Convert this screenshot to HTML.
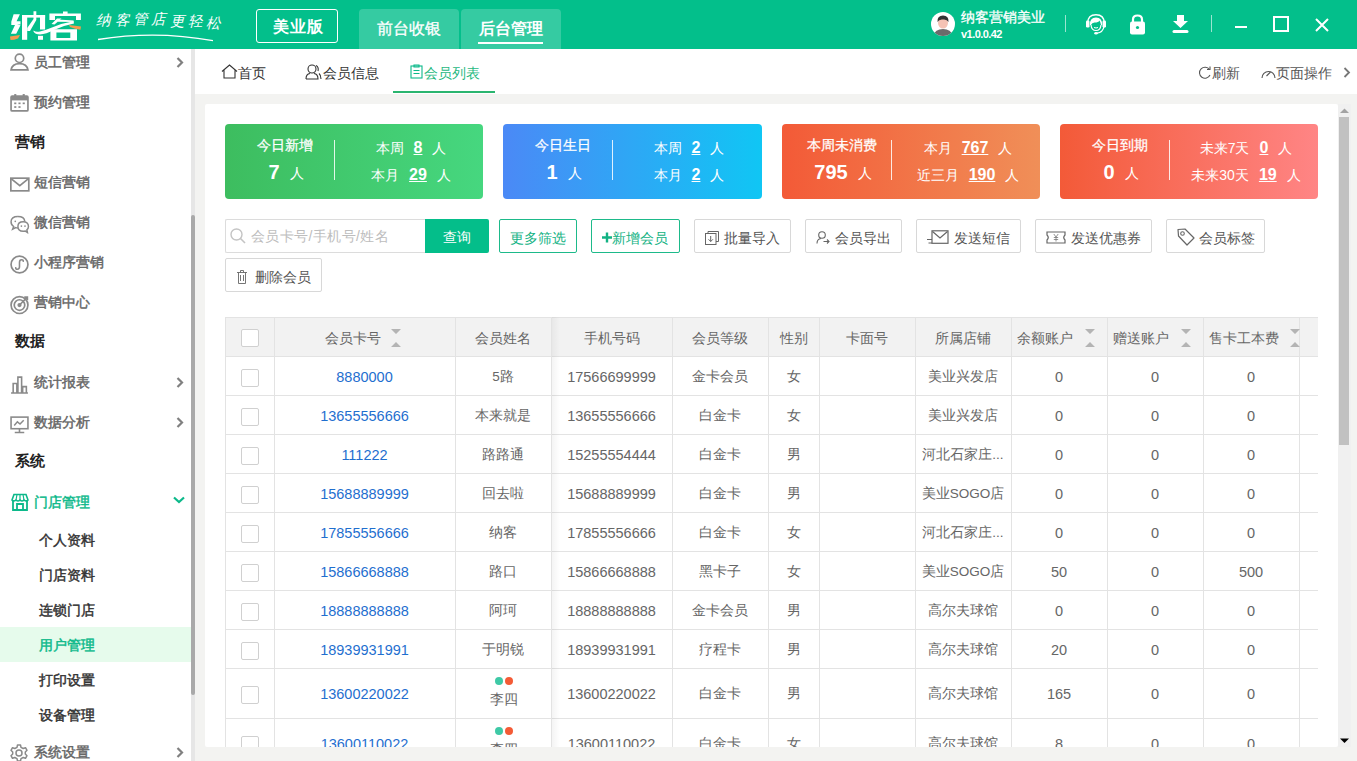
<!DOCTYPE html><html><head><meta charset="utf-8"><style>
*{box-sizing:border-box;margin:0;padding:0}
html,body{width:1357px;height:761px;overflow:hidden;background:#f3f3f1;font-family:"Liberation Sans",sans-serif;}
.abs{position:absolute}
.t{position:absolute;white-space:nowrap;line-height:1}
svg{position:absolute;overflow:visible}
</style></head><body>

<div class="abs" style="left:0;top:0;width:1357px;height:49px;background:#03bf8b"></div>
<svg style="left:0;top:0" width="90" height="48" viewBox="0 0 90 48">
<g fill="#fff">
<path d="M13.6 14.3 L19.9 14.3 L16.6 21.3 L20.5 21.3 L20.5 24.6 L17 24.6 L20.5 25.2 L16.2 33.8 L10.9 33.8 L15 25 L11.3 25 L11.3 21.8 L13.8 21.8 L11.3 21.8 Z"/>
<path d="M22 15 L27.2 15 L27.2 39.8 L22 39.8 Z"/>
<path d="M22 15 L45.1 15 L45.1 17.6 L22 17.6 Z"/>
<path d="M40 15 L45.1 15 L45.1 29.5 L40 29.5 Z"/>
<path d="M33.5 11.3 L36.3 11.3 L36.3 20 L30 31 L27.2 31 L27.2 28 L33.5 19 Z"/>
<path d="M38 35.8 L43 35.8 L43 39.8 L38 39.8 Z"/>
<path d="M63 11.5 L67.6 11.5 L67.6 14 L63 14 Z"/>
<path d="M49.4 13.6 L80.9 13.6 L80.9 19.9 L76 19.9 L76 16 L55 16 L55 19.9 L49.4 19.9 Z"/>
<path d="M57 18.5 L61.5 18.5 L54.5 24.5 L51.5 24 Z"/><path d="M58 19.5 L73.6 20.5 L73.6 22 L58 21.8 Z"/>
<path d="M33.5 30.5 Q36 32.5 40 31.5 Q46 30 52 27.5 Q62 23 73.6 21.2 L74 23.5 Q63 25.5 54 30 Q46 34 40 34.5 Q35 34.5 33.5 31.5 Z"/>
<path d="M50.4 29.2 L77 29.2 L77 40.5 L50.4 40.5 Z M56.4 32.5 L56.4 38.1 L70.3 38.1 L70.3 32.5 Z" fill-rule="evenodd"/>
</g>
<path d="M10 36.5 Q15 35.5 20 35 L18 38.5 Q14 40 10.5 40 Z" fill="#f49a4e"/>
<path d="M69 25 Q75 25.5 81 26.5 L80.5 29.8 Q75 29 70 27 Z" fill="#f49a4e"/>
</svg>
<div class="t" style="left:96px;top:13px;font-size:14.5px;color:#fff;font-style:italic">纳</div>
<div class="t" style="left:115px;top:13px;font-size:14.5px;color:#fff;font-style:italic">客</div>
<div class="t" style="left:133px;top:12px;font-size:14.5px;color:#fff;font-style:italic">管</div>
<div class="t" style="left:151px;top:12px;font-size:14.5px;color:#fff;font-style:italic">店</div>
<div class="t" style="left:170px;top:14px;font-size:14.5px;color:#fff;font-style:italic">更</div>
<div class="t" style="left:188px;top:14px;font-size:14.5px;color:#fff;font-style:italic">轻</div>
<div class="t" style="left:206px;top:16px;font-size:14.5px;color:#fff;font-style:italic">松</div>
<svg style="left:96px;top:30px" width="125" height="14"><path d="M2 9.5 Q60 0 117 10.7" stroke="#fff" stroke-width="1.3" fill="none"/></svg>
<div class="abs" style="left:256px;top:9px;width:82px;height:34px;border:1px solid #fff;border-radius:3px"></div>
<div class="t" style="left:257px;top:19px;width:82px;text-align:center;font-size:16px;font-weight:bold;color:#fff;letter-spacing:1px">美业版</div>
<div class="abs" style="left:359px;top:9px;width:100px;height:40px;background:rgba(255,255,255,0.2);border-radius:4px 4px 0 0"></div>
<div class="abs" style="left:461px;top:9px;width:100px;height:40px;background:rgba(255,255,255,0.2);border-radius:4px 4px 0 0"></div>
<div class="t" style="left:359px;top:21px;width:100px;text-align:center;font-size:16px;color:#fff;-webkit-text-stroke-width:0.3px">前台收银</div>
<div class="t" style="left:461px;top:21px;width:100px;text-align:center;font-size:16px;color:#fff;font-weight:bold">后台管理</div>
<div class="abs" style="left:478px;top:42px;width:65px;height:2px;background:#fff"></div>
<svg style="left:931px;top:12px" width="24" height="24" viewBox="0 0 24 24">
<defs><clipPath id="av"><circle cx="12" cy="12" r="12"/></clipPath></defs>
<circle cx="12" cy="12" r="12" fill="#fff"/>
<g clip-path="url(#av)">
<path d="M2 24 Q4 17 12 17 Q20 17 22 24 Z" fill="#6b6b6b"/>
<ellipse cx="12" cy="11" rx="5" ry="5.5" fill="#f5c2b4"/>
<path d="M6.5 10 Q6 3.5 12 3.5 Q18 3.5 17.5 10 Q16 7 12 7.5 Q8 7 6.5 10 Z" fill="#333"/>
</g></svg>
<div class="t" style="left:961px;top:10px;font-size:14px;color:#fff;-webkit-text-stroke:0.3px #fff">纳客营销美业</div>
<div class="t" style="left:961px;top:28.5px;font-size:11px;color:#fff;font-weight:bold;letter-spacing:-0.55px">v1.0.0.42</div>
<div class="abs" style="left:1065px;top:15px;width:1px;height:17px;background:rgba(255,255,255,0.6)"></div>
<svg style="left:1085px;top:13px" width="22" height="22" viewBox="0 0 22 22">
<path d="M2.8 10 Q2.8 1.8 11 1.8 Q19.2 1.8 19.2 10" stroke="#fff" stroke-width="1.4" fill="none"/>
<rect x="1" y="7.5" width="3.5" height="7" rx="1.2" fill="#fff"/>
<rect x="17.5" y="7.5" width="3.5" height="7" rx="1.2" fill="#fff"/>
<path d="M5 12 Q4.5 4.5 11 4.5 Q17.5 4.5 17 12 L16 12 Q15.5 9 14.5 7.5 Q13.5 9.5 9.5 9.5 Q7 9.5 6 12 Z" fill="#fff"/>
<path d="M6 12 Q6.5 17.5 11 17.5 Q15.5 17.5 16 12" stroke="#fff" stroke-width="1.2" fill="none"/>
<path d="M9 14.5 Q11 15.5 13 14.5" stroke="#fff" stroke-width="1" fill="none"/>
<path d="M19 13.5 Q18 19.5 12 20.2" stroke="#fff" stroke-width="1.3" fill="none"/>
<ellipse cx="11" cy="20.2" rx="1.8" ry="1.3" fill="#fff"/>
</svg>
<svg style="left:1129px;top:14px" width="17" height="21" viewBox="0 0 17 21">
<path d="M4 8 L4 5.5 Q4 1.5 8.5 1.5 Q13 1.5 13 5.5 L13 8" stroke="#fff" stroke-width="2.2" fill="none"/>
<rect x="1" y="7.5" width="15" height="13" rx="2" fill="#fff"/>
<circle cx="8.5" cy="13.5" r="1.6" fill="#03bf8b"/>
</svg>
<svg style="left:1172px;top:14px" width="17" height="20" viewBox="0 0 17 20">
<path d="M5 1 L12 1 L12 7 L16 7 L8.5 14 L1 7 L5 7 Z" fill="#fff"/>
<rect x="0.5" y="16" width="16" height="3" rx="1.5" fill="#fff"/>
</svg>
<div class="abs" style="left:1211px;top:15px;width:1px;height:17px;background:rgba(255,255,255,0.6)"></div>
<div class="abs" style="left:1235px;top:26px;width:12px;height:2px;background:#fff"></div>
<div class="abs" style="left:1273px;top:16px;width:16px;height:16px;border:2px solid #fff"></div>
<svg style="left:1315px;top:18px" width="14" height="14" viewBox="0 0 14 14">
<path d="M1 1 L13 13 M13 1 L1 13" stroke="#fff" stroke-width="2"/></svg>
<div class="abs" style="left:0;top:49px;width:191px;height:712px;background:#fff"></div>
<div class="abs" style="left:191px;top:49px;width:4px;height:712px;background:#e6e6e6"></div>
<div class="abs" style="left:191px;top:215px;width:4px;height:480px;background:#a9a9a9;border-radius:2px"></div>
<svg style="left:10px;top:53px" width="19" height="19" viewBox="0 0 18 18"><circle cx="9" cy="5" r="4" stroke="#8a8a8a" stroke-width="1.6" fill="none"/><path d="M1 16 Q2 10 9 10 Q16 10 17 16 Z" stroke="#8a8a8a" stroke-width="1.6" fill="none"/></svg>
<div class="t" style="left:34px;top:55px;font-size:14px;color:#666;-webkit-text-stroke-width:0.45px">员工管理</div>
<svg style="left:176px;top:57px" width="8" height="11" viewBox="0 0 8 11"><path d="M1.5 1 L6 5.5 L1.5 10" stroke="#808080" stroke-width="2.2" fill="none"/></svg>
<svg style="left:10px;top:93px" width="19" height="19" viewBox="0 0 18 18"><rect x="1" y="3" width="16" height="14" rx="1" stroke="#8a8a8a" stroke-width="1.6" fill="none"/><rect x="1" y="3" width="16" height="4" fill="#8a8a8a"/><rect x="4" y="1" width="2" height="3" fill="#8a8a8a"/><rect x="12" y="1" width="2" height="3" fill="#8a8a8a"/><g fill="#8a8a8a"><rect x="4" y="9" width="2" height="1.6"/><rect x="8" y="9" width="2" height="1.6"/><rect x="12" y="9" width="2" height="1.6"/><rect x="4" y="12.5" width="2" height="1.6"/><rect x="8" y="12.5" width="2" height="1.6"/></g></svg>
<div class="t" style="left:34px;top:95px;font-size:14px;color:#666;-webkit-text-stroke-width:0.45px">预约管理</div>
<div class="t" style="left:15px;top:134px;font-size:15px;color:#222;font-weight:bold">营销</div>
<svg style="left:10px;top:174.5px" width="19" height="19" viewBox="0 0 18 18"><rect x="0.8" y="3" width="17" height="12" stroke="#8a8a8a" stroke-width="1.6" fill="none"/><path d="M1 3.5 L9.3 10 L17.5 3.5" stroke="#8a8a8a" stroke-width="1.6" fill="none"/></svg>
<div class="t" style="left:34px;top:175px;font-size:14px;color:#666;-webkit-text-stroke-width:0.45px">短信营销</div>
<svg style="left:10px;top:214.5px" width="19" height="19" viewBox="0 0 18 18"><path d="M7.5 1.5 Q1 1.5 1 6.5 Q1 9.5 3.5 11 L2.5 13.5 L5.5 12 Q6.5 12.3 7.5 12.3" stroke="#8a8a8a" stroke-width="1.4" fill="none"/><path d="M7.5 1.5 Q13.5 1.5 14 6" stroke="#8a8a8a" stroke-width="1.4" fill="none"/><circle cx="5" cy="6" r="0.8" fill="#8a8a8a"/><path d="M12.5 6.5 Q7.5 6.5 7.5 11 Q7.5 15.5 12.5 15.5 Q13.5 15.5 14.5 15.2 L16.5 16.5 L16 14 Q17.5 12.8 17.5 11 Q17.5 6.5 12.5 6.5 Z" stroke="#8a8a8a" stroke-width="1.4" fill="#fff"/><circle cx="10.8" cy="10.5" r="0.8" fill="#8a8a8a"/><circle cx="14.2" cy="10.5" r="0.8" fill="#8a8a8a"/></svg>
<div class="t" style="left:34px;top:215px;font-size:14px;color:#666;-webkit-text-stroke-width:0.45px">微信营销</div>
<svg style="left:10px;top:254.5px" width="19" height="19" viewBox="0 0 18 18"><circle cx="9" cy="9" r="8" stroke="#8a8a8a" stroke-width="1.6" fill="none"/><path d="M5.5 11.5 Q5 13.5 7 13.5 Q9 13.5 9 11 L9 7 Q9 4.5 11 4.5 Q13 4.5 12.5 6.5" stroke="#8a8a8a" stroke-width="1.5" fill="none"/></svg>
<div class="t" style="left:34px;top:255px;font-size:14px;color:#666;-webkit-text-stroke-width:0.45px">小程序营销</div>
<svg style="left:10px;top:294.5px" width="19" height="19" viewBox="0 0 18 18"><circle cx="9" cy="9.5" r="8" stroke="#8a8a8a" stroke-width="1.6" fill="none"/><circle cx="9" cy="9.5" r="5" stroke="#8a8a8a" stroke-width="1.6" fill="none"/><circle cx="9" cy="9.5" r="2" fill="#8a8a8a"/><path d="M9 9.5 L16 2.5 M13.5 2 L16.5 2 L16.5 5" stroke="#8a8a8a" stroke-width="1.5" fill="none"/></svg>
<div class="t" style="left:34px;top:295px;font-size:14px;color:#666;-webkit-text-stroke-width:0.45px">营销中心</div>
<div class="t" style="left:15px;top:333px;font-size:15px;color:#222;font-weight:bold">数据</div>
<svg style="left:10px;top:374.5px" width="19" height="19" viewBox="0 0 18 18"><path d="M1 17 L17 17 M3 17 L3 8 L6.5 8 L6.5 17 M7.5 17 L7.5 2 L11 2 L11 17 M12 17 L12 11 L15.5 11 L15.5 17" stroke="#8a8a8a" stroke-width="1.5" fill="none"/></svg>
<div class="t" style="left:34px;top:375px;font-size:14px;color:#666;-webkit-text-stroke-width:0.45px">统计报表</div>
<svg style="left:176px;top:377px" width="8" height="11" viewBox="0 0 8 11"><path d="M1.5 1 L6 5.5 L1.5 10" stroke="#808080" stroke-width="2.2" fill="none"/></svg>
<svg style="left:10px;top:414.5px" width="19" height="19" viewBox="0 0 18 18"><rect x="1" y="2" width="16" height="11" stroke="#8a8a8a" stroke-width="1.5" fill="none"/><path d="M4 10 L7 6.5 L9.5 8.5 L13 5" stroke="#8a8a8a" stroke-width="1.4" fill="none"/><path d="M9 13 L9 16 M4.5 16.5 L13.5 16.5" stroke="#8a8a8a" stroke-width="1.5"/></svg>
<div class="t" style="left:34px;top:415px;font-size:14px;color:#666;-webkit-text-stroke-width:0.45px">数据分析</div>
<svg style="left:176px;top:417px" width="8" height="11" viewBox="0 0 8 11"><path d="M1.5 1 L6 5.5 L1.5 10" stroke="#808080" stroke-width="2.2" fill="none"/></svg>
<div class="t" style="left:15px;top:453px;font-size:15px;color:#222;font-weight:bold">系统</div>
<svg style="left:11px;top:493px" width="18" height="18" viewBox="0 0 18 18"><path d="M2 7 L2 17 L16 17 L16 7" stroke="#0cb98a" stroke-width="1.8" fill="none"/><path d="M1 7 L3 1.5 L15 1.5 L17 7 Q15.5 9 13 7 Q11 9 9 7 Q7 9 5 7 Q2.5 9 1 7 Z" stroke="#0cb98a" stroke-width="1.6" fill="none"/><path d="M6 17 L6 11 L12 11 L12 17" stroke="#0cb98a" stroke-width="1.8" fill="none"/><path d="M6 1.5 L5 7 M12 1.5 L13 7 M9 1.5 L9 7" stroke="#0cb98a" stroke-width="1.2"/></svg>
<div class="t" style="left:34px;top:495px;font-size:14px;color:#0cb98a;-webkit-text-stroke-width:0.45px">门店管理</div>
<svg style="left:173px;top:496px" width="12" height="8" viewBox="0 0 12 8"><path d="M1 1.5 L6 6 L11 1.5" stroke="#0cb98a" stroke-width="2.2" fill="none"/></svg>
<div class="abs" style="left:0;top:627px;width:191px;height:35px;background:#e6fbec"></div>
<div class="t" style="left:39px;top:533px;font-size:14px;color:#333;-webkit-text-stroke-width:0.45px">个人资料</div>
<div class="t" style="left:39px;top:568px;font-size:14px;color:#333;-webkit-text-stroke-width:0.45px">门店资料</div>
<div class="t" style="left:39px;top:603px;font-size:14px;color:#333;-webkit-text-stroke-width:0.45px">连锁门店</div>
<div class="t" style="left:39px;top:638px;font-size:14px;color:#0cb98a;-webkit-text-stroke-width:0.45px">用户管理</div>
<div class="t" style="left:39px;top:673px;font-size:14px;color:#333;-webkit-text-stroke-width:0.45px">打印设置</div>
<div class="t" style="left:39px;top:708px;font-size:14px;color:#333;-webkit-text-stroke-width:0.45px">设备管理</div>
<svg style="left:10px;top:744px" width="18" height="18" viewBox="0 0 18 18"><circle cx="9" cy="9" r="3" stroke="#8a8a8a" stroke-width="1.5" fill="none"/><path d="M7.5 1 L10.5 1 L11 3.3 L13.2 4.5 L15.5 3.7 L17 6.3 L15.3 8 L15.3 10 L17 11.7 L15.5 14.3 L13.2 13.5 L11 14.7 L10.5 17 L7.5 17 L7 14.7 L4.8 13.5 L2.5 14.3 L1 11.7 L2.7 10 L2.7 8 L1 6.3 L2.5 3.7 L4.8 4.5 L7 3.3 Z" stroke="#8a8a8a" stroke-width="1.5" fill="none" stroke-linejoin="round"/></svg>
<div class="t" style="left:34px;top:745px;font-size:14px;color:#666;-webkit-text-stroke-width:0.45px">系统设置</div>
<svg style="left:176px;top:747px" width="8" height="11" viewBox="0 0 8 11"><path d="M1.5 1 L6 5.5 L1.5 10" stroke="#808080" stroke-width="2.2" fill="none"/></svg>
<div class="abs" style="left:195px;top:49px;width:1162px;height:45px;background:#fff"></div>
<svg style="left:221px;top:64px" width="17" height="15" viewBox="0 0 17 15">
<path d="M1 7.5 L8.5 1 L16 7.5 M3 6 L3 14 L14 14 L14 6" stroke="#333" stroke-width="1.1" fill="none"/></svg>
<div class="t" style="left:238px;top:66px;font-size:14px;color:#333">首页</div>
<svg style="left:305px;top:64px" width="17" height="16" viewBox="0 0 17 16">
<circle cx="7" cy="5" r="4" stroke="#333" stroke-width="1.1" fill="none"/>
<path d="M1 15 Q1 10 5 9.5 M9 9.5 Q13 10 13 15 L1 15" stroke="#333" stroke-width="1.1" fill="none"/>
<path d="M11 1.5 Q14 3 13 7 M14 9.5 Q16 11 16 15" stroke="#333" stroke-width="1.1" fill="none"/></svg>
<div class="t" style="left:323px;top:66px;font-size:14px;color:#333">会员信息</div>
<svg style="left:410px;top:64px" width="13" height="15" viewBox="0 0 13 15">
<rect x="1" y="2" width="11" height="12" stroke="#0cb98a" stroke-width="1.1" fill="none"/>
<path d="M4 1 L9 1 L9 3 L4 3 Z M3.5 6.5 L9.5 6.5 M3.5 9.5 L9.5 9.5" stroke="#0cb98a" stroke-width="1.1" fill="none"/></svg>
<div class="t" style="left:424px;top:66px;font-size:14px;color:#1fb97f">会员列表</div>
<div class="abs" style="left:393px;top:91px;width:102px;height:2px;background:#2ab56f"></div>
<svg style="left:1198px;top:66px" width="14" height="14" viewBox="0 0 14 14">
<path d="M11.5 3.5 A5.5 5.5 0 1 0 12 9" stroke="#555" stroke-width="1.1" fill="none"/>
<path d="M9 3.5 L12 3.5 L12 0.5" stroke="#555" stroke-width="1.1" fill="none"/></svg>
<div class="t" style="left:1212px;top:66px;font-size:14px;color:#555">刷新</div>
<svg style="left:1261px;top:67px" width="15" height="12" viewBox="0 0 15 12">
<path d="M1 11 A6.5 6.5 0 1 1 14 11" stroke="#555" stroke-width="1.1" fill="none"/>
<path d="M5.5 9 L9.5 5" stroke="#555" stroke-width="1.1"/></svg>
<div class="t" style="left:1276px;top:66px;font-size:14px;color:#555">页面操作</div>
<svg style="left:1343px;top:67px" width="8" height="11" viewBox="0 0 8 11"><path d="M1.5 1 L6 5.5 L1.5 10" stroke="#777" stroke-width="1.8" fill="none"/></svg>
<div class="abs" style="left:205px;top:104px;width:1133px;height:643px;background:#fff;border-radius:2px"></div>
<div class="abs" style="left:1338px;top:104px;width:13px;height:643px;background:#f0f0f0"></div>
<div class="abs" style="left:1339px;top:117px;width:10px;height:328px;background:#c1c1c1"></div>
<svg style="left:1340px;top:108px" width="9" height="6" viewBox="0 0 9 6"><path d="M0 5 L4.5 0.5 L9 5 Z" fill="#a3a3a3"/></svg>
<svg style="left:1340px;top:738px" width="9" height="6" viewBox="0 0 9 6"><path d="M0 0.5 L9 0.5 L4.5 5 Z" fill="#000"/></svg>
<div class="abs" style="left:225px;top:124px;width:258px;height:75px;border-radius:4px;background:linear-gradient(90deg,#3dbd5f,#46d77f)"></div>
<div class="t" style="left:225px;top:138px;width:120px;text-align:center;font-size:14px;color:#fff;-webkit-text-stroke-width:0.25px">今日新增</div>
<div class="t" style="left:226px;top:162px;width:120px;text-align:center;font-size:14px;color:#fff"><b style="font-size:20px">7</b><span style="margin-left:10px;position:relative;top:-1px">人</span></div>
<div class="abs" style="left:334px;top:140px;width:1px;height:40px;background:rgba(255,255,255,0.85)"></div>
<div class="t" style="left:335px;top:140px;width:152px;text-align:center;font-size:14px;color:#fff">本周<b style="text-decoration:underline;font-size:16px;margin-left:10px;margin-right:10px">8</b>人</div>
<div class="t" style="left:335px;top:167px;width:152px;text-align:center;font-size:14px;color:#fff">本月<b style="text-decoration:underline;font-size:16px;margin-left:10px;margin-right:10px">29</b>人</div>
<div class="abs" style="left:503px;top:124px;width:259px;height:75px;border-radius:4px;background:linear-gradient(90deg,#4b89f6,#10c6f4)"></div>
<div class="t" style="left:503px;top:138px;width:120px;text-align:center;font-size:14px;color:#fff;-webkit-text-stroke-width:0.25px">今日生日</div>
<div class="t" style="left:504px;top:162px;width:120px;text-align:center;font-size:14px;color:#fff"><b style="font-size:20px">1</b><span style="margin-left:10px;position:relative;top:-1px">人</span></div>
<div class="abs" style="left:612px;top:140px;width:1px;height:40px;background:rgba(255,255,255,0.85)"></div>
<div class="t" style="left:613px;top:140px;width:152px;text-align:center;font-size:14px;color:#fff">本周<b style="text-decoration:underline;font-size:16px;margin-left:10px;margin-right:10px">2</b>人</div>
<div class="t" style="left:613px;top:167px;width:152px;text-align:center;font-size:14px;color:#fff">本月<b style="text-decoration:underline;font-size:16px;margin-left:10px;margin-right:10px">2</b>人</div>
<div class="abs" style="left:782px;top:124px;width:258px;height:75px;border-radius:4px;background:linear-gradient(90deg,#f35a37,#f08f58)"></div>
<div class="t" style="left:782px;top:138px;width:120px;text-align:center;font-size:14px;color:#fff;-webkit-text-stroke-width:0.25px">本周未消费</div>
<div class="t" style="left:783px;top:162px;width:120px;text-align:center;font-size:14px;color:#fff"><b style="font-size:20px">795</b><span style="margin-left:10px;position:relative;top:-1px">人</span></div>
<div class="abs" style="left:891px;top:140px;width:1px;height:40px;background:rgba(255,255,255,0.85)"></div>
<div class="t" style="left:892px;top:140px;width:152px;text-align:center;font-size:14px;color:#fff">本月<b style="text-decoration:underline;font-size:16px;margin-left:10px;margin-right:10px">767</b>人</div>
<div class="t" style="left:892px;top:167px;width:152px;text-align:center;font-size:14px;color:#fff">近三月<b style="text-decoration:underline;font-size:16px;margin-left:10px;margin-right:10px">190</b>人</div>
<div class="abs" style="left:1060px;top:124px;width:258px;height:75px;border-radius:4px;background:linear-gradient(90deg,#f35a38,#ff8585)"></div>
<div class="t" style="left:1060px;top:138px;width:120px;text-align:center;font-size:14px;color:#fff;-webkit-text-stroke-width:0.25px">今日到期</div>
<div class="t" style="left:1061px;top:162px;width:120px;text-align:center;font-size:14px;color:#fff"><b style="font-size:20px">0</b><span style="margin-left:10px;position:relative;top:-1px">人</span></div>
<div class="abs" style="left:1169px;top:140px;width:1px;height:40px;background:rgba(255,255,255,0.85)"></div>
<div class="t" style="left:1170px;top:140px;width:152px;text-align:center;font-size:14px;color:#fff">未来7天<b style="text-decoration:underline;font-size:16px;margin-left:10px;margin-right:10px">0</b>人</div>
<div class="t" style="left:1170px;top:167px;width:152px;text-align:center;font-size:14px;color:#fff">未来30天<b style="text-decoration:underline;font-size:16px;margin-left:10px;margin-right:10px">19</b>人</div>
<div class="abs" style="left:225px;top:219px;width:201px;height:34px;border:1px solid #dcdcdc;border-right:none;border-radius:2px 0 0 2px"></div>
<svg style="left:230px;top:228px" width="16" height="16" viewBox="0 0 16 16"><circle cx="6.5" cy="6.5" r="5.5" stroke="#c4c4c4" stroke-width="1.4" fill="none"/><path d="M10.5 10.5 L15 15" stroke="#c4c4c4" stroke-width="1.6"/></svg>
<div class="t" style="left:251px;top:229px;font-size:14px;color:#bdbdbd;letter-spacing:0.4px">会员卡号/手机号/姓名</div>
<div class="abs" style="left:425px;top:219px;width:64px;height:34px;background:#04be8a;border-radius:0 2px 2px 0"></div>
<div class="t" style="left:425px;top:230px;width:64px;text-align:center;font-size:14px;color:#fff">查询</div>
<div class="abs" style="left:499px;top:219px;width:78px;height:34px;border:1px solid #1dba8a;border-radius:2px"></div>
<div class="t" style="left:510px;top:231px;font-size:14px;color:#12b283">更多筛选</div>
<div class="abs" style="left:591px;top:219px;width:89px;height:34px;border:1px solid #1dba8a;border-radius:2px"></div>
<div class="t" style="left:612px;top:231px;font-size:14px;color:#12b283">新增会员</div>
<svg style="left:602px;top:232px" width="10" height="11" viewBox="0 0 10 11"><path d="M5 0.5 L5 10.5 M0 5.5 L10 5.5" stroke="#12b283" stroke-width="2.4"/></svg>
<div class="abs" style="left:694px;top:219px;width:97px;height:34px;border:1px solid #d8d8d8;border-radius:2px"></div>
<div class="t" style="left:724px;top:231px;font-size:14px;color:#555">批量导入</div>
<svg style="left:705px;top:231px" width="14" height="14" viewBox="0 0 14 14"><path d="M3 2.5 L3 0.5 L13.5 0.5 L13.5 10.5 L11 10.5" stroke="#666" stroke-width="1" fill="none"/><rect x="0.5" y="2.5" width="10.5" height="11" stroke="#666" stroke-width="1" fill="none"/><path d="M5.7 5 L5.7 10.5 M3.5 8.3 L5.7 10.5 L7.9 8.3" stroke="#666" stroke-width="1" fill="none"/></svg>
<div class="abs" style="left:805px;top:219px;width:97px;height:34px;border:1px solid #d8d8d8;border-radius:2px"></div>
<div class="t" style="left:835px;top:231px;font-size:14px;color:#555">会员导出</div>
<svg style="left:816px;top:231px" width="14" height="13" viewBox="0 0 14 13"><circle cx="6" cy="4" r="3.3" stroke="#666" stroke-width="1.1" fill="none"/><path d="M1 12.5 Q1 8 5 7.5 M7.5 10.5 L13 10.5 M11 8.5 L13 10.5 L11 12.5" stroke="#666" stroke-width="1.1" fill="none"/></svg>
<div class="abs" style="left:916px;top:219px;width:105px;height:34px;border:1px solid #d8d8d8;border-radius:2px"></div>
<div class="t" style="left:954px;top:231px;font-size:14px;color:#555">发送短信</div>
<svg style="left:927px;top:230px" width="22" height="14" viewBox="0 0 22 14"><rect x="5" y="0.8" width="16" height="12.5" stroke="#666" stroke-width="1.2" fill="none"/><path d="M5.5 1.5 L13 8 L20.5 1.5" stroke="#666" stroke-width="1.2" fill="none"/><path d="M0 9.5 L5 9.5 M1.5 13 L5 13" stroke="#666" stroke-width="1"/></svg>
<div class="abs" style="left:1035px;top:219px;width:117px;height:34px;border:1px solid #d8d8d8;border-radius:2px"></div>
<div class="t" style="left:1071px;top:231px;font-size:14px;color:#555">发送优惠券</div>
<svg style="left:1046px;top:231px" width="20" height="13" viewBox="0 0 20 13"><path d="M1 1 L19 1 L19 4 Q16.5 6.5 19 9 L19 12 L1 12 L1 9 Q3.5 6.5 1 4 Z" stroke="#666" stroke-width="1.2" fill="none"/><path d="M7.8 3 L10 6 L12.2 3 M7.8 6.5 L12.2 6.5 M7.8 8.5 L12.2 8.5 M10 6 L10 10.5" stroke="#777" stroke-width="0.8" fill="none"/></svg>
<div class="abs" style="left:1166px;top:219px;width:99px;height:34px;border:1px solid #d8d8d8;border-radius:2px"></div>
<div class="t" style="left:1199px;top:231px;font-size:14px;color:#555">会员标签</div>
<svg style="left:1177px;top:228px" width="18" height="18" viewBox="0 0 18 18"><path d="M1 1.5 L8 1 L17 10 L10 17 L1.5 8 Z" stroke="#666" stroke-width="1.2" fill="none" stroke-linejoin="round"/><circle cx="5.5" cy="5.5" r="1.8" stroke="#666" stroke-width="1.1" fill="none"/></svg>
<div class="abs" style="left:225px;top:258px;width:97px;height:34px;border:1px solid #d8d8d8;border-radius:2px"></div>
<div class="t" style="left:255px;top:270px;font-size:14px;color:#555">删除会员</div>
<svg style="left:237px;top:269px" width="10" height="15" viewBox="0 0 10 15"><path d="M0 3.5 L10 3.5 M3.5 3.5 L3.5 1.5 L6.5 1.5 L6.5 3.5 M1.5 3.5 L1.5 14.5 L8.5 14.5 L8.5 3.5 M3.5 6 L3.5 12 M6.5 6 L6.5 12" stroke="#666" stroke-width="0.9" fill="none"/></svg>
<div class="abs" style="left:225px;top:317px;width:1093px;height:40px;background:#f2f2f2"></div>
<div class="abs" style="left:225px;top:317px;width:1093px;height:1px;background:#e3e3e3"></div>
<div class="abs" style="left:225px;top:356px;width:1093px;height:1px;background:#e3e3e3"></div>
<div class="abs" style="left:225px;top:395px;width:1093px;height:1px;background:#e3e3e3"></div>
<div class="abs" style="left:225px;top:434px;width:1093px;height:1px;background:#e3e3e3"></div>
<div class="abs" style="left:225px;top:473px;width:1093px;height:1px;background:#e3e3e3"></div>
<div class="abs" style="left:225px;top:512px;width:1093px;height:1px;background:#e3e3e3"></div>
<div class="abs" style="left:225px;top:551px;width:1093px;height:1px;background:#e3e3e3"></div>
<div class="abs" style="left:225px;top:590px;width:1093px;height:1px;background:#e3e3e3"></div>
<div class="abs" style="left:225px;top:629px;width:1093px;height:1px;background:#e3e3e3"></div>
<div class="abs" style="left:225px;top:668px;width:1093px;height:1px;background:#e3e3e3"></div>
<div class="abs" style="left:225px;top:718px;width:1093px;height:1px;background:#e3e3e3"></div>
<div class="abs" style="left:225px;top:768px;width:1093px;height:1px;background:#e3e3e3"></div>
<div class="abs" style="left:225px;top:317px;width:1px;height:430px;background:#e3e3e3"></div>
<div class="abs" style="left:274px;top:317px;width:1px;height:430px;background:#e3e3e3"></div>
<div class="abs" style="left:455px;top:317px;width:1px;height:430px;background:#e3e3e3"></div>
<div class="abs" style="left:551px;top:317px;width:1px;height:430px;background:#e3e3e3"></div>
<div class="abs" style="left:672px;top:317px;width:1px;height:430px;background:#e3e3e3"></div>
<div class="abs" style="left:768px;top:317px;width:1px;height:430px;background:#e3e3e3"></div>
<div class="abs" style="left:819px;top:317px;width:1px;height:430px;background:#e3e3e3"></div>
<div class="abs" style="left:915px;top:317px;width:1px;height:430px;background:#e3e3e3"></div>
<div class="abs" style="left:1011px;top:317px;width:1px;height:430px;background:#e3e3e3"></div>
<div class="abs" style="left:1107px;top:317px;width:1px;height:430px;background:#e3e3e3"></div>
<div class="abs" style="left:1203px;top:317px;width:1px;height:430px;background:#e3e3e3"></div>
<div class="abs" style="left:1299px;top:317px;width:1px;height:430px;background:#e3e3e3"></div>
<div class="abs" style="left:241px;top:329px;width:18px;height:18px;border:1px solid #d0d0d0;border-radius:2px;background:#fff"></div>
<div class="t" style="left:274px;top:331px;width:157px;text-align:center;font-size:14px;color:#666">会员卡号</div>
<svg style="left:391px;top:329px" width="10" height="18" viewBox="0 0 10 18"><path d="M0 0 L10 0 L5 5 Z M0 18 L10 18 L5 13 Z" fill="#b4b4b4"/></svg>
<div class="t" style="left:455px;top:331px;width:96px;text-align:center;font-size:14px;color:#666">会员姓名</div>
<div class="t" style="left:551px;top:331px;width:121px;text-align:center;font-size:14px;color:#666">手机号码</div>
<div class="t" style="left:672px;top:331px;width:96px;text-align:center;font-size:14px;color:#666">会员等级</div>
<div class="t" style="left:768px;top:331px;width:51px;text-align:center;font-size:14px;color:#666">性别</div>
<div class="t" style="left:819px;top:331px;width:96px;text-align:center;font-size:14px;color:#666">卡面号</div>
<div class="t" style="left:915px;top:331px;width:96px;text-align:center;font-size:14px;color:#666">所属店铺</div>
<div class="t" style="left:1017px;top:331px;font-size:14px;color:#666">余额账户</div>
<svg style="left:1085px;top:329px" width="10" height="18" viewBox="0 0 10 18"><path d="M0 0 L10 0 L5 5 Z M0 18 L10 18 L5 13 Z" fill="#b4b4b4"/></svg>
<div class="t" style="left:1113px;top:331px;font-size:14px;color:#666">赠送账户</div>
<svg style="left:1181px;top:329px" width="10" height="18" viewBox="0 0 10 18"><path d="M0 0 L10 0 L5 5 Z M0 18 L10 18 L5 13 Z" fill="#b4b4b4"/></svg>
<div class="t" style="left:1209px;top:331px;font-size:14px;color:#666">售卡工本费</div>
<svg style="left:1290px;top:329px" width="10" height="18" viewBox="0 0 10 18"><path d="M0 0 L10 0 L5 5 Z M0 18 L10 18 L5 13 Z" fill="#b4b4b4"/></svg>
<div class="abs" style="left:241px;top:368.5px;width:18px;height:18px;border:1px solid #d0d0d0;border-radius:2px;background:#fff"></div>
<div class="t" style="left:274px;top:369.5px;width:181px;text-align:center;font-size:14.5px;color:#1f6fcf">8880000</div>
<div class="t" style="left:455px;top:369.5px;width:96px;text-align:center;font-size:13.5px;color:#666">5路</div>
<div class="t" style="left:551px;top:369.5px;width:121px;text-align:center;font-size:14.5px;color:#666">17566699999</div>
<div class="t" style="left:672px;top:369.5px;width:96px;text-align:center;font-size:13.5px;color:#666">金卡会员</div>
<div class="t" style="left:768px;top:369.5px;width:51px;text-align:center;font-size:13.5px;color:#666">女</div>
<div class="t" style="left:915px;top:369.5px;width:96px;text-align:center;font-size:13.5px;color:#666">美业兴发店</div>
<div class="t" style="left:1011px;top:369.5px;width:96px;text-align:center;font-size:14.5px;color:#666">0</div>
<div class="t" style="left:1107px;top:369.5px;width:96px;text-align:center;font-size:14.5px;color:#666">0</div>
<div class="t" style="left:1203px;top:369.5px;width:96px;text-align:center;font-size:14.5px;color:#666">0</div>
<div class="abs" style="left:241px;top:407.5px;width:18px;height:18px;border:1px solid #d0d0d0;border-radius:2px;background:#fff"></div>
<div class="t" style="left:274px;top:408.5px;width:181px;text-align:center;font-size:14.5px;color:#1f6fcf">13655556666</div>
<div class="t" style="left:455px;top:408.5px;width:96px;text-align:center;font-size:13.5px;color:#666">本来就是</div>
<div class="t" style="left:551px;top:408.5px;width:121px;text-align:center;font-size:14.5px;color:#666">13655556666</div>
<div class="t" style="left:672px;top:408.5px;width:96px;text-align:center;font-size:13.5px;color:#666">白金卡</div>
<div class="t" style="left:768px;top:408.5px;width:51px;text-align:center;font-size:13.5px;color:#666">女</div>
<div class="t" style="left:915px;top:408.5px;width:96px;text-align:center;font-size:13.5px;color:#666">美业兴发店</div>
<div class="t" style="left:1011px;top:408.5px;width:96px;text-align:center;font-size:14.5px;color:#666">0</div>
<div class="t" style="left:1107px;top:408.5px;width:96px;text-align:center;font-size:14.5px;color:#666">0</div>
<div class="t" style="left:1203px;top:408.5px;width:96px;text-align:center;font-size:14.5px;color:#666">0</div>
<div class="abs" style="left:241px;top:446.5px;width:18px;height:18px;border:1px solid #d0d0d0;border-radius:2px;background:#fff"></div>
<div class="t" style="left:274px;top:447.5px;width:181px;text-align:center;font-size:14.5px;color:#1f6fcf">111222</div>
<div class="t" style="left:455px;top:447.5px;width:96px;text-align:center;font-size:13.5px;color:#666">路路通</div>
<div class="t" style="left:551px;top:447.5px;width:121px;text-align:center;font-size:14.5px;color:#666">15255554444</div>
<div class="t" style="left:672px;top:447.5px;width:96px;text-align:center;font-size:13.5px;color:#666">白金卡</div>
<div class="t" style="left:768px;top:447.5px;width:51px;text-align:center;font-size:13.5px;color:#666">男</div>
<div class="t" style="left:915px;top:447.5px;width:96px;text-align:center;font-size:13.5px;color:#666">河北石家庄...</div>
<div class="t" style="left:1011px;top:447.5px;width:96px;text-align:center;font-size:14.5px;color:#666">0</div>
<div class="t" style="left:1107px;top:447.5px;width:96px;text-align:center;font-size:14.5px;color:#666">0</div>
<div class="t" style="left:1203px;top:447.5px;width:96px;text-align:center;font-size:14.5px;color:#666">0</div>
<div class="abs" style="left:241px;top:485.5px;width:18px;height:18px;border:1px solid #d0d0d0;border-radius:2px;background:#fff"></div>
<div class="t" style="left:274px;top:486.5px;width:181px;text-align:center;font-size:14.5px;color:#1f6fcf">15688889999</div>
<div class="t" style="left:455px;top:486.5px;width:96px;text-align:center;font-size:13.5px;color:#666">回去啦</div>
<div class="t" style="left:551px;top:486.5px;width:121px;text-align:center;font-size:14.5px;color:#666">15688889999</div>
<div class="t" style="left:672px;top:486.5px;width:96px;text-align:center;font-size:13.5px;color:#666">白金卡</div>
<div class="t" style="left:768px;top:486.5px;width:51px;text-align:center;font-size:13.5px;color:#666">男</div>
<div class="t" style="left:915px;top:486.5px;width:96px;text-align:center;font-size:13.5px;color:#666">美业SOGO店</div>
<div class="t" style="left:1011px;top:486.5px;width:96px;text-align:center;font-size:14.5px;color:#666">0</div>
<div class="t" style="left:1107px;top:486.5px;width:96px;text-align:center;font-size:14.5px;color:#666">0</div>
<div class="t" style="left:1203px;top:486.5px;width:96px;text-align:center;font-size:14.5px;color:#666">0</div>
<div class="abs" style="left:241px;top:524.5px;width:18px;height:18px;border:1px solid #d0d0d0;border-radius:2px;background:#fff"></div>
<div class="t" style="left:274px;top:525.5px;width:181px;text-align:center;font-size:14.5px;color:#1f6fcf">17855556666</div>
<div class="t" style="left:455px;top:525.5px;width:96px;text-align:center;font-size:13.5px;color:#666">纳客</div>
<div class="t" style="left:551px;top:525.5px;width:121px;text-align:center;font-size:14.5px;color:#666">17855556666</div>
<div class="t" style="left:672px;top:525.5px;width:96px;text-align:center;font-size:13.5px;color:#666">白金卡</div>
<div class="t" style="left:768px;top:525.5px;width:51px;text-align:center;font-size:13.5px;color:#666">女</div>
<div class="t" style="left:915px;top:525.5px;width:96px;text-align:center;font-size:13.5px;color:#666">河北石家庄...</div>
<div class="t" style="left:1011px;top:525.5px;width:96px;text-align:center;font-size:14.5px;color:#666">0</div>
<div class="t" style="left:1107px;top:525.5px;width:96px;text-align:center;font-size:14.5px;color:#666">0</div>
<div class="t" style="left:1203px;top:525.5px;width:96px;text-align:center;font-size:14.5px;color:#666">0</div>
<div class="abs" style="left:241px;top:563.5px;width:18px;height:18px;border:1px solid #d0d0d0;border-radius:2px;background:#fff"></div>
<div class="t" style="left:274px;top:564.5px;width:181px;text-align:center;font-size:14.5px;color:#1f6fcf">15866668888</div>
<div class="t" style="left:455px;top:564.5px;width:96px;text-align:center;font-size:13.5px;color:#666">路口</div>
<div class="t" style="left:551px;top:564.5px;width:121px;text-align:center;font-size:14.5px;color:#666">15866668888</div>
<div class="t" style="left:672px;top:564.5px;width:96px;text-align:center;font-size:13.5px;color:#666">黑卡子</div>
<div class="t" style="left:768px;top:564.5px;width:51px;text-align:center;font-size:13.5px;color:#666">女</div>
<div class="t" style="left:915px;top:564.5px;width:96px;text-align:center;font-size:13.5px;color:#666">美业SOGO店</div>
<div class="t" style="left:1011px;top:564.5px;width:96px;text-align:center;font-size:14.5px;color:#666">50</div>
<div class="t" style="left:1107px;top:564.5px;width:96px;text-align:center;font-size:14.5px;color:#666">0</div>
<div class="t" style="left:1203px;top:564.5px;width:96px;text-align:center;font-size:14.5px;color:#666">500</div>
<div class="abs" style="left:241px;top:602.5px;width:18px;height:18px;border:1px solid #d0d0d0;border-radius:2px;background:#fff"></div>
<div class="t" style="left:274px;top:603.5px;width:181px;text-align:center;font-size:14.5px;color:#1f6fcf">18888888888</div>
<div class="t" style="left:455px;top:603.5px;width:96px;text-align:center;font-size:13.5px;color:#666">阿珂</div>
<div class="t" style="left:551px;top:603.5px;width:121px;text-align:center;font-size:14.5px;color:#666">18888888888</div>
<div class="t" style="left:672px;top:603.5px;width:96px;text-align:center;font-size:13.5px;color:#666">金卡会员</div>
<div class="t" style="left:768px;top:603.5px;width:51px;text-align:center;font-size:13.5px;color:#666">男</div>
<div class="t" style="left:915px;top:603.5px;width:96px;text-align:center;font-size:13.5px;color:#666">高尔夫球馆</div>
<div class="t" style="left:1011px;top:603.5px;width:96px;text-align:center;font-size:14.5px;color:#666">0</div>
<div class="t" style="left:1107px;top:603.5px;width:96px;text-align:center;font-size:14.5px;color:#666">0</div>
<div class="t" style="left:1203px;top:603.5px;width:96px;text-align:center;font-size:14.5px;color:#666">0</div>
<div class="abs" style="left:241px;top:641.5px;width:18px;height:18px;border:1px solid #d0d0d0;border-radius:2px;background:#fff"></div>
<div class="t" style="left:274px;top:642.5px;width:181px;text-align:center;font-size:14.5px;color:#1f6fcf">18939931991</div>
<div class="t" style="left:455px;top:642.5px;width:96px;text-align:center;font-size:13.5px;color:#666">于明锐</div>
<div class="t" style="left:551px;top:642.5px;width:121px;text-align:center;font-size:14.5px;color:#666">18939931991</div>
<div class="t" style="left:672px;top:642.5px;width:96px;text-align:center;font-size:13.5px;color:#666">疗程卡</div>
<div class="t" style="left:768px;top:642.5px;width:51px;text-align:center;font-size:13.5px;color:#666">男</div>
<div class="t" style="left:915px;top:642.5px;width:96px;text-align:center;font-size:13.5px;color:#666">高尔夫球馆</div>
<div class="t" style="left:1011px;top:642.5px;width:96px;text-align:center;font-size:14.5px;color:#666">20</div>
<div class="t" style="left:1107px;top:642.5px;width:96px;text-align:center;font-size:14.5px;color:#666">0</div>
<div class="t" style="left:1203px;top:642.5px;width:96px;text-align:center;font-size:14.5px;color:#666">0</div>
<div class="abs" style="left:241px;top:686.0px;width:18px;height:18px;border:1px solid #d0d0d0;border-radius:2px;background:#fff"></div>
<div class="t" style="left:274px;top:687.0px;width:181px;text-align:center;font-size:14.5px;color:#1f6fcf">13600220022</div>
<div class="abs" style="left:495px;top:677px;width:8px;height:8px;border-radius:50%;background:#3ec9a6"></div>
<div class="abs" style="left:505px;top:677px;width:8px;height:8px;border-radius:50%;background:#f45b36"></div>
<div class="t" style="left:456px;top:693px;width:96px;text-align:center;font-size:13.5px;color:#666">李四</div>
<div class="t" style="left:551px;top:687.0px;width:121px;text-align:center;font-size:14.5px;color:#666">13600220022</div>
<div class="t" style="left:672px;top:687.0px;width:96px;text-align:center;font-size:13.5px;color:#666">白金卡</div>
<div class="t" style="left:768px;top:687.0px;width:51px;text-align:center;font-size:13.5px;color:#666">男</div>
<div class="t" style="left:915px;top:687.0px;width:96px;text-align:center;font-size:13.5px;color:#666">高尔夫球馆</div>
<div class="t" style="left:1011px;top:687.0px;width:96px;text-align:center;font-size:14.5px;color:#666">165</div>
<div class="t" style="left:1107px;top:687.0px;width:96px;text-align:center;font-size:14.5px;color:#666">0</div>
<div class="t" style="left:1203px;top:687.0px;width:96px;text-align:center;font-size:14.5px;color:#666">0</div>
<div class="abs" style="left:241px;top:736.0px;width:18px;height:18px;border:1px solid #d0d0d0;border-radius:2px;background:#fff"></div>
<div class="t" style="left:274px;top:737.0px;width:181px;text-align:center;font-size:14.5px;color:#1f6fcf">13600110022</div>
<div class="abs" style="left:495px;top:727px;width:8px;height:8px;border-radius:50%;background:#3ec9a6"></div>
<div class="abs" style="left:505px;top:727px;width:8px;height:8px;border-radius:50%;background:#f45b36"></div>
<div class="t" style="left:456px;top:743px;width:96px;text-align:center;font-size:13.5px;color:#666">李四</div>
<div class="t" style="left:551px;top:737.0px;width:121px;text-align:center;font-size:14.5px;color:#666">13600110022</div>
<div class="t" style="left:672px;top:737.0px;width:96px;text-align:center;font-size:13.5px;color:#666">白金卡</div>
<div class="t" style="left:768px;top:737.0px;width:51px;text-align:center;font-size:13.5px;color:#666">女</div>
<div class="t" style="left:915px;top:737.0px;width:96px;text-align:center;font-size:13.5px;color:#666">高尔夫球馆</div>
<div class="t" style="left:1011px;top:737.0px;width:96px;text-align:center;font-size:14.5px;color:#666">8</div>
<div class="t" style="left:1107px;top:737.0px;width:96px;text-align:center;font-size:14.5px;color:#666">0</div>
<div class="t" style="left:1203px;top:737.0px;width:96px;text-align:center;font-size:14.5px;color:#666">0</div>
<div class="abs" style="left:552px;top:317px;width:8px;height:430px;background:linear-gradient(90deg,rgba(0,0,0,0.045),rgba(0,0,0,0))"></div>
<div class="abs" style="left:195px;top:747px;width:1162px;height:14px;background:#f3f3f1"></div>
</body></html>
